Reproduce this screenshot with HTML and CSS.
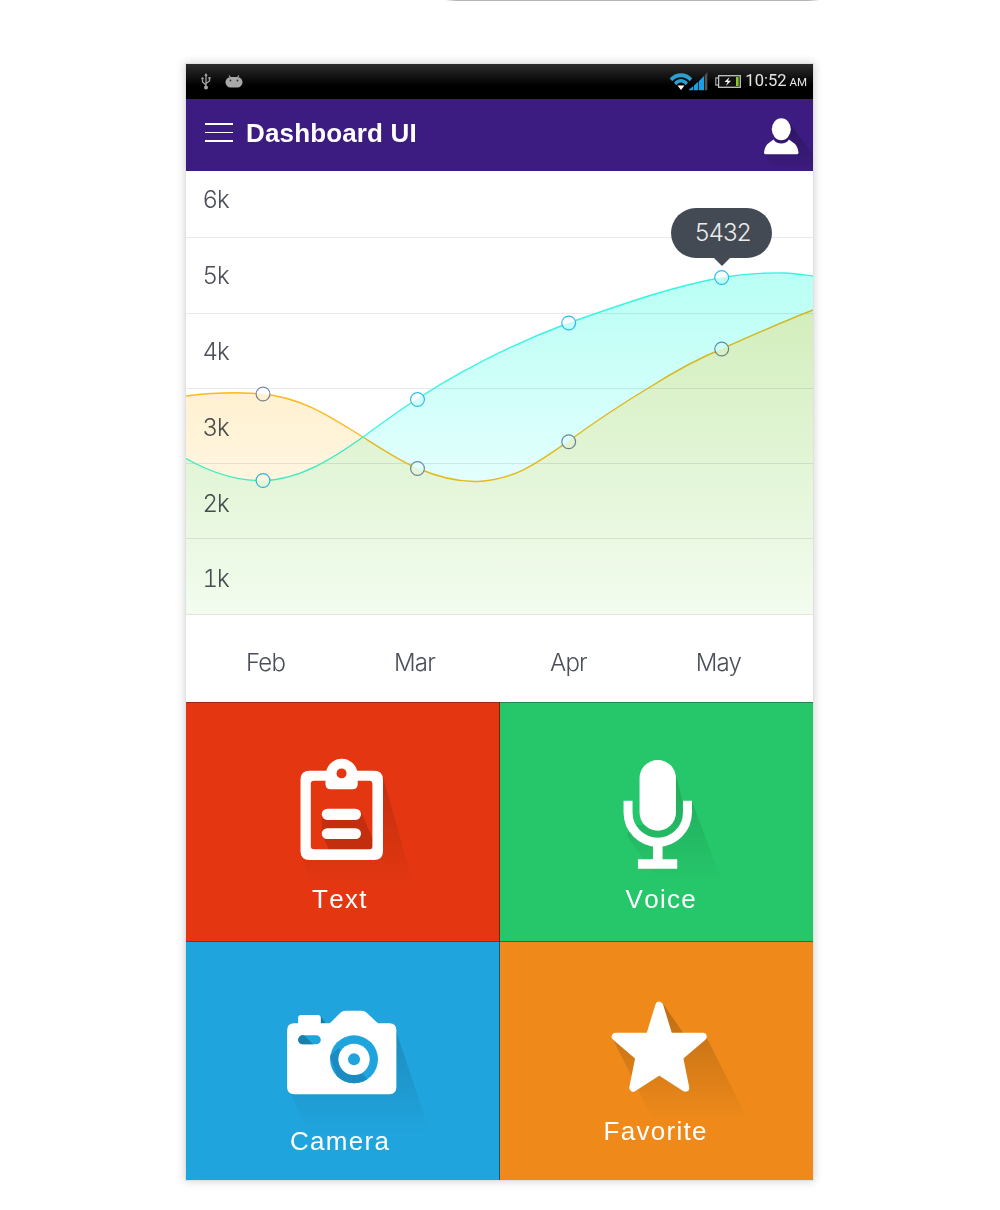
FILE: index.html
```html
<!DOCTYPE html>
<html lang="en">
<head>
<meta charset="utf-8">
<title>Dashboard UI</title>
<link rel="stylesheet" href="styles.css">
</head>
<body>
<div class="edge"></div>
<main class="phone">
  <div class="status">
    <div class="status-left">
      <svg class="ic-usb" viewBox="0 0 12 18" width="12" height="18"><path d="M6 1v13M6 12L2.500 9V6.500M6 10.500l3.500-2.500V6" fill="none" stroke="#a5a5a5" stroke-width="1.300"/><circle cx="6" cy="14.500" r="2" fill="#a5a5a5"/><path d="M6 0l1.600 3H4.400z" fill="#a5a5a5"/><circle cx="2.500" cy="5.500" r="1.200" fill="#a5a5a5"/><rect x="8.500" y="4" width="2" height="2" fill="#a5a5a5"/></svg>
      <svg class="ic-droid" viewBox="0 0 18 14" width="18" height="14"><path d="M4 .5l2 2.500M14 .5l-2 2.500" stroke="#a8a8a8" stroke-width="1.200"/><rect x="0.500" y="2" width="17" height="10.500" rx="5.250" fill="#a8a8a8"/><circle cx="5.500" cy="5.500" r=".9" fill="#333"/><circle cx="12.500" cy="5.500" r=".9" fill="#333"/></svg>
    </div>
    <div class="status-right">
      <svg class="ic-wifi" viewBox="670 71 39 19" width="39" height="19">
        <path fill="#2b9fcf" d="M670.700 77.500C676 70.500 688 70.500 693.200 77.500L690.600 80.200C686.500 74.800 677.500 74.800 673.300 80.200z"/>
        <path fill="#2b9fcf" d="M675 81.800C678.500 76.800 685.500 76.800 689 81.800L686.600 84.200C684 80.500 680 80.500 677.400 84.200z"/>
        <path fill="#fff" d="M678.500 84.500H685.500L682 89z"/>
        <path fill="#1a9fe6" d="M690 89.300V88.500L694.300 85V89.300zM695 89.300V84.500L699.300 80.500V89.300zM700 89.300V80L705 75V89.300z"/>
        <path fill="#555" d="M705.700 89.300V74.500L708.300 71V89.300z"/>
      </svg>
      <svg class="ic-batt" viewBox="0 0 26 13" width="26" height="13"><path d="M3.500 3H.8v7h2.700" fill="none" stroke="#9a9a9a" stroke-width="1.300"/><rect x="3.600" y=".7" width="21.700" height="11.600" fill="#111" stroke="#c4c4c4" stroke-width="1.300"/><path d="M14.500 2L9.500 7h3l-1.500 4 5-5.200h-3z" fill="#f2f2f2"/><rect x="21" y="2" width="2.600" height="9" fill="#86cc1e"/></svg>
      <span class="clock">10:52<span class="ampm">AM</span></span>
    </div>
  </div>
  <header class="appbar">
    <span class="burger"><i></i><i></i><i></i></span>
    <h1 class="title">Dashboard UI</h1>
    <svg class="ic-user" viewBox="756 110 57 61" width="57" height="61">
      <defs><linearGradient id="ush" x1="0" y1="0" x2="0" y2="1"><stop offset="0" stop-color="#000" stop-opacity=".26"/><stop offset="1" stop-color="#000" stop-opacity=".02"/></linearGradient></defs>
      <path d="M789 122L813 155V171H775L765 154z" fill="url(#ush)"/>
      <ellipse cx="781.300" cy="129.200" rx="9.500" ry="11" fill="#fff"/>
      <path d="M773.500 139.500C775 142 778 143.500 781.300 143.500S787.500 142 789 139.500L795 144C797 146 798 149 798.500 152.500Q798.600 154.300 797 154.300H765.500Q763.900 154.300 764 152.500C764.500 149 765.500 146 767.500 144z" fill="#fff"/>
    </svg>
  </header>
  <section class="chart">
    <div class="plot">
      <div class="lines"><i></i><i></i><i></i><i></i><i></i><i></i></div>
      <div class="ticks"><span>6k</span><span>5k</span><span>4k</span><span>3k</span><span>2k</span><span>1k</span></div>
      <svg class="areas" viewBox="186 171 627 444" width="627" height="444">
        <defs>
          <linearGradient id="gt" gradientUnits="userSpaceOnUse" x1="0" y1="270" x2="0" y2="615"><stop offset="0" stop-color="#b8fff4"/><stop offset=".6" stop-color="#e2fffd"/><stop offset="1" stop-color="#f6fffd"/></linearGradient>
          <linearGradient id="gy" gradientUnits="userSpaceOnUse" x1="0" y1="390" x2="0" y2="615"><stop offset="0" stop-color="#fff1d0"/><stop offset=".4" stop-color="#fff5e0"/><stop offset="1" stop-color="#fffdf8"/></linearGradient>
          <linearGradient id="go" gradientUnits="userSpaceOnUse" x1="0" y1="310" x2="0" y2="615"><stop offset="0" stop-color="#d3eebc"/><stop offset=".5" stop-color="#e2f5d6"/><stop offset="1" stop-color="#f3fcef"/></linearGradient>
          <clipPath id="ct"><path d="M186 458.500C210 472 235 481 263 480.500C300 480 335 457 363 437C382 423 400 410 417 399C465 368 515 343 568.500 323C620 305 670 287 721.500 277.500C745 273.500 765 272.500 785 273C795 273.500 805 275 813 276V615H186z"/></clipPath>
        </defs>
        <path fill="url(#gt)" d="M186 458.500C210 472 235 481 263 480.500C300 480 335 457 363 437C382 423 400 410 417 399C465 368 515 343 568.500 323C620 305 670 287 721.500 277.500C745 273.500 765 272.500 785 273C795 273.500 805 275 813 276V615H186z"/>
        <path fill="url(#gy)" d="M186 396C205 393.500 235 391.500 263 394C305 398 335 420 363 437C385 451 400 461 417 468C440 478 458 482 478 481.500C515 480 540 461 568 441.500C600 418 625 402 650 387C672 373 695 360 721.500 349C755 334 785 321 813 310V615H186z"/>
        <path fill="url(#go)" clip-path="url(#ct)" d="M186 396C205 393.500 235 391.500 263 394C305 398 335 420 363 437C385 451 400 461 417 468C440 478 458 482 478 481.500C515 480 540 461 568 441.500C600 418 625 402 650 387C672 373 695 360 721.500 349C755 334 785 321 813 310V615H186z"/>
      </svg>
      <svg class="marks" viewBox="186 171 627 444" width="627" height="444">
        <path class="ln-y" d="M186 396C205 393.500 235 391.500 263 394C305 398 335 420 363 437C385 451 400 461 417 468C440 478 458 482 478 481.500C515 480 540 461 568 441.500C600 418 625 402 650 387C672 373 695 360 721.500 349C755 334 785 321 813 310"/>
        <path class="ln-t" d="M186 458.500C210 472 235 481 263 480.500C300 480 335 457 363 437C382 423 400 410 417 399C465 368 515 343 568.500 323C620 305 670 287 721.500 277.500C745 273.500 765 272.500 785 273C795 273.500 805 275 813 276"/>
        <g class="dot-y"><circle cx="263" cy="394" r="6.900"/><circle cx="417.500" cy="468.500" r="6.900"/><circle cx="568.700" cy="441.700" r="6.900"/><circle cx="721.700" cy="349" r="6.900"/></g>
        <g class="dot-t"><circle cx="263" cy="480.500" r="6.900"/><circle cx="417.500" cy="399.500" r="6.900"/><circle cx="568.700" cy="323" r="6.900"/><circle cx="721.700" cy="277.500" r="6.900"/></g>
      </svg>
      <div class="tip">5432</div>
    </div>
    <div class="months"><span>Feb</span><span>Mar</span><span>Apr</span><span>May</span></div>
  </section>
  <section class="tiles">
    <a class="tile t-red">
      <svg class="art" viewBox="186 703 313 238">
        <defs>
          <linearGradient id="s1" gradientUnits="userSpaceOnUse" x1="0" y1="770" x2="0" y2="888"><stop offset="0" stop-color="#000" stop-opacity=".16"/><stop offset="1" stop-color="#000" stop-opacity="0"/></linearGradient>
        </defs>
        <path fill="url(#s1)" d="M383 776L415 888H312L301 855H383z"/>
        <path fill="#fff" fill-rule="evenodd" d="M309.700 770.700H326.500A16 16 0 0 1 357.500 770.700H374.300Q383.300 770.700 383.300 779.700V851Q383.300 860 374.300 860H309.700Q300.700 860 300.700 851V779.700Q300.700 770.700 309.700 770.700ZM314 780.700Q311 780.700 311 783.700V846.300Q311 849.300 314 849.300H369.700Q372.700 849.300 372.700 846.300V783.700Q372.700 780.700 369.700 780.700H358V784Q358 789.300 352.700 789.300H331Q325.700 789.300 325.700 784V780.700Z"/>
        <circle cx="341.800" cy="773.300" r="5" fill="#e43711"/>
        <path fill="#000" fill-opacity=".14" d="M361 811L372.700 838V849.300H329L322 834V818z"/>
        <rect x="322" y="808.700" width="39.300" height="11.300" rx="5.650" fill="#fff"/>
        <rect x="322" y="828.300" width="39.300" height="10.800" rx="5.400" fill="#fff"/>
      </svg>
      <span class="label l-text">Text</span>
    </a>
    <a class="tile t-green">
      <svg class="art" viewBox="500 703 313 238">
        <defs>
          <linearGradient id="s2" gradientUnits="userSpaceOnUse" x1="0" y1="770" x2="0" y2="888"><stop offset="0" stop-color="#000" stop-opacity=".15"/><stop offset="1" stop-color="#000" stop-opacity="0"/></linearGradient>
        </defs>
        <path fill="url(#s2)" d="M675.700 775L682.300 801H691.700L724 888H664L626 835L632.300 825H645z"/>
        <rect x="639.300" y="760" width="36.400" height="70.700" rx="18.200" fill="#fff"/>
        <path fill="none" stroke="#fff" stroke-width="9" d="M627.800 800.700V812.500A29.700 29.700 0 0 0 687.200 812.500V800.700"/>
        <path fill="#fff" d="M652.700 840H662.300V859.300H677V868.700H637.700V859.300H652.700z"/>
      </svg>
      <span class="label l-voice">Voice</span>
    </a>
    <a class="tile t-blue">
      <svg class="art" viewBox="186 942 313 238">
        <defs>
          <linearGradient id="s3" gradientUnits="userSpaceOnUse" x1="0" y1="1020" x2="0" y2="1135"><stop offset="0" stop-color="#000" stop-opacity=".16"/><stop offset="1" stop-color="#000" stop-opacity="0"/></linearGradient>
          <clipPath id="lens"><circle cx="354.300" cy="1059.300" r="24"/></clipPath>
          <clipPath id="flash"><rect x="298.300" y="1035.300" width="22.700" height="9" rx="4.500"/></clipPath>
        </defs>
        <path fill="url(#s3)" d="M395 1027L431 1134H309L290 1092z"/>
        <path fill="#000" fill-opacity=".25" d="M321 1016L326 1023.300H321z"/>
        <path fill="#fff" d="M301.300 1015H318Q321 1015 321 1018V1023.300H330L340.700 1012.700Q342.700 1010.700 345.700 1010.700H362Q365 1010.700 367 1012.700L378.300 1023.300H389.700Q396.700 1023.300 396.700 1030.300V1087.300Q396.700 1094.300 389.700 1094.300H294.300Q287.300 1094.300 287.300 1087.300V1030.300Q287.300 1023.300 294.300 1023.300H298.300V1018Q298.300 1015 301.300 1015Z"/>
        <circle cx="354.300" cy="1059.300" r="24" fill="#20a4de"/>
        <path clip-path="url(#lens)" fill="#1b8cc2" d="M330 1056L339 1048L372 1084H340z"/>
        <circle cx="354.300" cy="1059.300" r="15.700" fill="#fff"/>
        <circle cx="354.300" cy="1059.300" r="6" fill="#20a4de"/>
        <rect x="298.300" y="1035.300" width="22.700" height="9" rx="4.500" fill="#20a4de"/>
        <path clip-path="url(#flash)" fill="#1b7fae" d="M296 1034H303L315 1046H296z"/>
      </svg>
      <span class="label l-camera">Camera</span>
    </a>
    <a class="tile t-orange">
      <svg class="art" viewBox="500 942 313 238">
        <defs>
          <linearGradient id="s4" gradientUnits="userSpaceOnUse" x1="0" y1="1005" x2="0" y2="1122"><stop offset="0" stop-color="#000" stop-opacity=".21"/><stop offset="1" stop-color="#000" stop-opacity="0"/></linearGradient>
        </defs>
        <path fill="url(#s4)" d="M663 1004L683 1033H704L747 1118H652L613 1040L650 1040z"/>
        <path class="star" d="M659 1005.700L668.500 1036.700H702.500L678.800 1057L685 1087.700L659 1071L633 1087.700L639.200 1057L615.500 1036.700H649.500z"/>
      </svg>
      <span class="label l-fav">Favorite</span>
    </a>
  </section>
</main>
</body>
</html>
```

FILE: styles.css
```css
* { box-sizing: border-box; }
html, body { margin: 0; padding: 0; background: #fff; }
body { font-family: "Liberation Sans", Arial, sans-serif; height: 1210px; overflow: hidden; }

.edge {
  width: 375px; height: 1px; margin-left: 445px;
  background: linear-gradient(90deg, transparent, #b5b5b5 3%, #b5b5b5 97%, transparent);
}
.phone {
  width: 629px; height: 1118px; margin: 62px 0 0 185px;
  border: 1px solid #e0e0e0;
  box-shadow: 0 0 9px rgba(0,0,0,.18);
  display: flex; flex-direction: column;
  background: #fff;
}

.status {
  height: 35px; flex: none;
  background: linear-gradient(#2c2c2c, #000 62%);
  display: flex; align-items: center; justify-content: space-between;
  padding: 0 6px 0 14px;
}
.status-left { display: flex; align-items: center; gap: 13px; }
.status-right { display: flex; align-items: center; }
.ic-wifi { display: block; }
.ic-batt { display: block; margin-left: 7px; }
.clock { font-family: Roboto, sans-serif; font-size: 16.5px; color: #e6e6e6; margin: 0 0 2px 4px; }
.ampm { font-size: 11.5px; margin-left: 3px; }

.appbar {
  height: 72px; flex: none; background: #3d1c82;
  display: flex; align-items: center;
  padding-left: 19px; position: relative;
}
.burger { display: flex; flex-direction: column; gap: 7px; width: 28px; margin-bottom: 5px; }
.burger i { display: block; height: 1.6px; background: #fff; }
.title { margin: 0 0 4px 13px; font-size: 26px; font-weight: 700; color: #fff; letter-spacing: .15px; flex: 1; }
.ic-user { display: block; align-self: flex-end; }

.chart { height: 531px; flex: none; display: flex; flex-direction: column; background: #fff; }
.plot { display: grid; height: 444px; position: relative; }
.plot > * { grid-area: 1 / 1; }
.lines { display: flex; flex-direction: column; }
.lines i { display: block; height: 75px; flex: none; border-bottom: 1px solid #e9e9ec; }
.lines i:nth-child(1) { height: 67px; }
.lines i:nth-child(2), .lines i:nth-child(6) { height: 76px; }
.ticks {
  display: flex; flex-direction: column; margin-top: -9px; padding-left: 16.5px;
  font-family: Inter, sans-serif; font-weight: 300; font-size: 24px; color: #4a4f59; letter-spacing: -1px;
  font-variant-numeric: tabular-nums;
}
.ticks span { display: flex; align-items: center; height: 75.8px; flex: none; }
.areas { mix-blend-mode: multiply; display: block; }
.marks { display: block; }
.ln-y, .ln-t { fill: none; stroke-width: 1.4; }
.ln-y { stroke: #ffbd20; }
.ln-t { stroke: #3ff5e5; }
.dot-y circle, .dot-t circle { fill: #fff; stroke-width: 1.2; }
.dot-y circle { stroke: #7b89a8; }
.dot-t circle { stroke: #35b9f2; }

.tip {
  position: absolute; left: 485px; top: 37px; width: 101px; height: 50px;
  border-radius: 25px; background: #434a54; color: #ececec; padding: 0 0 2px 3px;
  font-family: Inter, sans-serif; font-weight: 300; font-size: 24px; letter-spacing: -.7px;
  display: flex; align-items: center; justify-content: center;
}
.tip::after {
  content: ""; position: absolute; left: 42px; top: 49px;
  border: 9px solid transparent; border-top-color: #434a54; border-bottom: 0;
}

.months {
  flex: 1; display: grid; grid-template-columns: 149px 149px 159px 141px;
  padding: 7px 0 0 5px; align-items: center; text-align: center;
  font-family: Inter, sans-serif; font-weight: 300; font-size: 24px; color: #4a4f59; letter-spacing: -.8px;
}

.tiles {
  flex: 1; display: grid; grid-template-columns: 1fr 1fr; grid-template-rows: 239px 239px;
}
.tile { display: grid; overflow: hidden; border-top: 1px solid rgba(0,0,0,.45); }
.tile:nth-child(-n+2) { border-top-color: rgba(0,0,0,.3); }
.tile:nth-child(odd) { border-right: 1px solid rgba(0,0,0,.45); }
.tile > * { grid-area: 1 / 1; }
.t-red { background: #e43711; }
.t-green { background: #26c76b; }
.t-blue { background: #20a4de; }
.t-orange { background: #ef8a1a; }
.art { display: block; width: 100%; height: 238px; }
.star { fill: #fff; stroke: #fff; stroke-width: 8; stroke-linejoin: round; }
.label { color: #fff; font-size: 26px; line-height: 30px; letter-spacing: 1.3px; font-kerning: none; align-self: start; justify-self: start; }
.l-text { margin: 181px 0 0 126px; }
.l-voice { margin: 181px 0 0 126px; }
.l-camera { margin: 184px 0 0 104px; }
.l-fav { margin: 174px 0 0 104px; }
```
